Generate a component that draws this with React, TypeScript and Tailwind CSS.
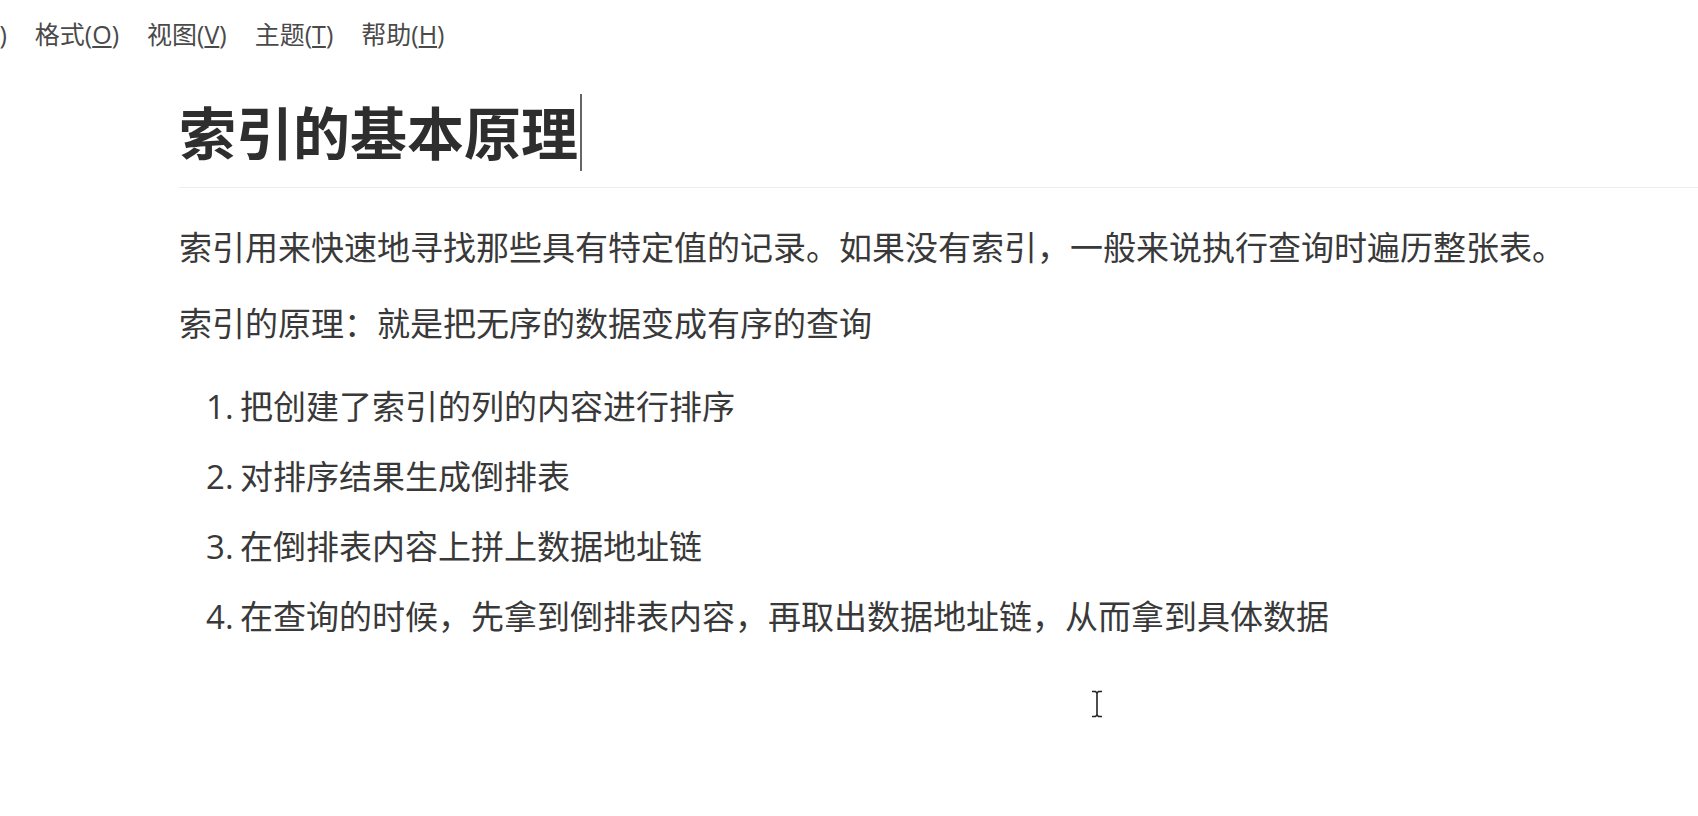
const menus = [
  { label: "段落", key: "P" },
  { label: "格式", key: "O" },
  { label: "视图", key: "V" },
  { label: "主题", key: "T" },
  { label: "帮助", key: "H" },
];

const steps = [
  "把创建了索引的列的内容进行排序",
  "对排序结果生成倒排表",
  "在倒排表内容上拼上数据地址链",
  "在查询的时候，先拿到倒排表内容，再取出数据地址链，从而拿到具体数据",
];

function IBeam() {
  return (
    <svg width="12" height="28" viewBox="0 0 12 28" className="absolute left-[1091px] top-[690px]">
      <path d="M1 1.5h3.5L6 3l1.5-1.5H11M1 26.5h3.5L6 25l1.5 1.5H11M6 3v22" fill="none" stroke="#222" strokeWidth="1.6" />
    </svg>
  );
}

export default function App() {
  return (
    <div className="relative h-[816px] w-full overflow-hidden bg-white font-['Open_Sans','Noto_Sans_CJK_SC',sans-serif]">
      {/* menu bar */}
      <div className="flex h-[70px] items-center gap-[28px] text-[25px] text-[#4a4a4a]">
        {menus.map((m, i) => (
          <span key={m.key} className={i === 0 ? "-ml-[73px]" : ""}>
            {m.label}(<u className="underline-offset-2">{m.key}</u>)
          </span>
        ))}
      </div>

      <div className="pl-[179px]">
        <h1 className="mt-[24px] flex items-center border-b border-[#eeeeee] pb-[16px] text-[57px] leading-[76px] font-bold text-[#2e2e2e]">
          索引的基本原理
          <span className="ml-[2px] inline-block h-[77px] w-[2px] bg-[#666]" />
        </h1>

        <div className="text-[33px] leading-[50px] text-[#393939]">
          <p className="mt-[35px]">索引用来快速地寻找那些具有特定值的记录。如果没有索引，一般来说执行查询时遍历整张表。</p>
          <p className="mt-[26px]">索引的原理：就是把无序的数据变成有序的查询</p>

          <ol className="mt-[33px] flex flex-col gap-[20px]">
            {steps.map((s, i) => (
              <li key={i} className="flex">
                <span className="w-[61px] pl-[27px]">{i + 1}.</span>
                <span>{s}</span>
              </li>
            ))}
          </ol>
        </div>
      </div>

      <IBeam />
    </div>
  );
}
